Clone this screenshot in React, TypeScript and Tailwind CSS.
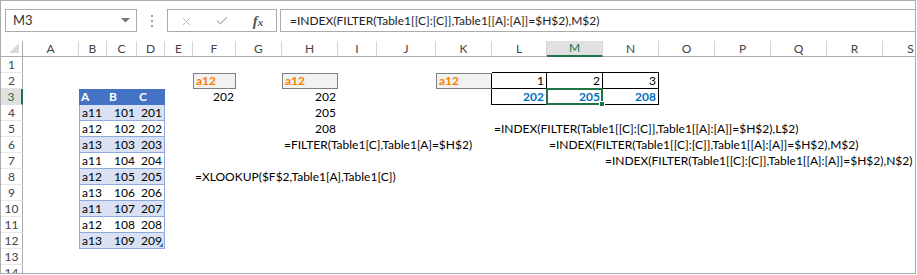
import { Check, X } from "lucide-react";

const COLS = ["A", "B", "C", "D", "E", "F", "G", "H", "I", "J", "K", "L", "M", "N", "O", "P", "Q", "R", "S"];
const WIDTHS = [
  "w-[56px]", "w-[28px]", "w-[30px]", "w-[28px]", "w-[28px]", "w-[43px]", "w-[46px]", "w-[56px]", "w-[39px]", "w-[59px]",
  "w-[56px]", "w-[55px]", "w-[56px]", "w-[56px]", "w-[56px]", "w-[56px]", "w-[56px]", "w-[56px]", "w-[56px]",
];

type Cell = { v?: string; r?: boolean; cls?: string; sel?: boolean; handle?: boolean };

const calc = "bg-[#F2F2F2] border border-[#7F7F7F] text-[#FA7D00] font-bold";
const out = "text-[#0070C0] font-bold border-b border-r border-black";
const formula = "=INDEX(FILTER(Table1[[C]:[C]],Table1[[A]:[A]]=$H$2),";

const cells: Record<string, Cell> = {
  L1: { cls: "border-b border-black" },
  M1: { cls: "border-b border-black" },
  N1: { cls: "border-b border-black" },
  F2: { v: "a12", cls: calc },
  H2: { v: "a12", cls: calc },
  K2: { v: "a12", cls: "bg-[#F2F2F2] border-y border-l border-[#7F7F7F] text-[#FA7D00] font-bold shadow-[inset_-1px_0_0_#000]" },
  L2: { v: "1", r: true, cls: "border-b border-r border-black" },
  M2: { v: "2", r: true, cls: "border-b border-r border-black" },
  N2: { v: "3", r: true, cls: "border-b border-r border-black" },
  F3: { v: "202", r: true },
  H3: { v: "202", r: true },
  K3: { cls: "border-r border-black" },
  L3: { v: "202", r: true, cls: out },
  M3: { v: "205", r: true, cls: out, sel: true },
  N3: { v: "208", r: true, cls: out },
  H4: { v: "205", r: true },
  H5: { v: "208", r: true },
  L5: { v: formula + "L$2)" },
  H6: { v: "=FILTER(Table1[C],Table1[A]=$H$2)" },
  M6: { v: formula + "M$2)" },
  N7: { v: formula + "N$2)" },
  F8: { v: "=XLOOKUP($F$2,Table1[A],Table1[C])" },
  B3: { v: "A", cls: "bg-[#4472C4] text-white font-bold" },
  C3: { v: "B", cls: "bg-[#4472C4] text-white font-bold" },
  D3: { v: "C", cls: "bg-[#4472C4] text-white font-bold" },
};

// table body, banded rows
for (let n = 4; n <= 12; n++) {
  const band = n % 2 === 0 ? "bg-[#D9E1F2]" : "bg-white";
  cells["B" + n] = { v: "a1" + (((n - 4) % 3) + 1), cls: `${band} border-l border-b border-[#8EA9DB]` };
  cells["C" + n] = { v: String(97 + n), r: true, cls: `${band} border-b border-[#8EA9DB]` };
  cells["D" + n] = { v: String(197 + n), r: true, cls: `${band} border-r border-b border-[#8EA9DB]`, handle: n === 12 };
}

function Row({ n }: { n: number }) {
  return (
    <div className="flex h-[16px]">
      {n === 3 ? (
        <div className="flex w-[22px] shrink-0 items-center justify-center border-r-2 border-b border-r-[#217346] border-b-[#E1E1E1] bg-[#E1E1E1] text-[#217346]">
          {n}
        </div>
      ) : (
        <div className="flex w-[22px] shrink-0 items-center justify-center border-r border-b border-r-[#ABABAB] border-b-[#E6E6E6] text-[#444]">
          {n}
        </div>
      )}
      {COLS.map((c, i) => {
        const cell = cells[c + n];
        return (
          <div
            key={c}
            className={`relative flex h-[16px] shrink-0 items-center whitespace-nowrap px-[2px] ${WIDTHS[i]} ${cell?.r ? "justify-end" : ""} ${cell?.cls ?? ""}`}
          >
            {cell?.v}
            {cell?.sel && (
              <div className="absolute -top-[1px] -right-[1px] -bottom-[1px] -left-[1px] z-10 border-2 border-[#217346]">
                <div className="absolute -right-[4px] -bottom-[4px] h-[6px] w-[6px] border border-white bg-[#217346]" />
              </div>
            )}
            {cell?.handle && (
              <div className="absolute right-[1px] bottom-[1px] h-0 w-0 border-b-[4px] border-l-[4px] border-b-[#4472C4] border-l-transparent" />
            )}
          </div>
        );
      })}
    </div>
  );
}

export default function App() {
  const rows = Array.from({ length: 14 }, (_, i) => i + 1);

  return (
    <div className="h-[275px] w-[917px] overflow-hidden bg-white font-[Lato,sans-serif] text-[12px] text-black">
      <div className="h-[274px] w-[916px] overflow-hidden border border-[#ABABAB]">
        {/* formula bar */}
        <div className="flex h-[40px] items-start pt-[8px] pl-[4px]">
          <div className="flex h-[23px] w-[132px] shrink-0 items-center justify-between border border-[#ABABAB] pr-[6px] pl-[7px] text-[13px] text-[#333]">
            <span>M3</span>
            <svg width="9" height="5" viewBox="0 0 9 5">
              <path d="M0 0h9L4.5 4.5z" fill="#777" />
            </svg>
          </div>
          <div className="flex h-[23px] w-[30px] shrink-0 flex-col items-center justify-center gap-[3px]">
            <span className="h-[2px] w-[2px] bg-[#9B9B9B]" />
            <span className="h-[2px] w-[2px] bg-[#9B9B9B]" />
            <span className="h-[2px] w-[2px] bg-[#9B9B9B]" />
          </div>
          <div className="grid h-[23px] w-[110px] shrink-0 grid-cols-3 items-center border border-[#ABABAB]">
            <span className="flex justify-center">
              <X size={13} strokeWidth={1.6} color="#B5B5B5" />
            </span>
            <span className="flex justify-center">
              <Check size={14} strokeWidth={2.2} color="#B5B5B5" />
            </span>
            <span className="flex items-baseline justify-center font-['Liberation_Serif',serif] text-[15px] font-bold text-[#555] italic">
              f<span className="text-[11px]">x</span>
            </span>
          </div>
          <div className="ml-[3px] flex h-[23px] flex-1 items-center border-y border-l border-[#ABABAB] pl-[9px] text-[#222]">
            =INDEX(FILTER(Table1[[C]:[C]],Table1[[A]:[A]]=$H$2),M$2)
          </div>
        </div>

        {/* column headers */}
        <div className="flex h-[16px]">
          <div className="relative w-[22px] shrink-0 border-r border-b border-r-[#ABABAB] border-b-[#ABABAB]">
            <div className="absolute right-[3px] bottom-[3px] h-0 w-0 border-b-[10px] border-l-[10px] border-b-[#DADADA] border-l-transparent" />
          </div>
          {COLS.map((c, i) =>
            c === "M" ? (
              <div
                key={c}
                className={`flex shrink-0 items-center justify-center border-r border-b-2 border-r-[#D4D4D4] border-b-[#217346] bg-[#E1E1E1] text-[#217346] ${WIDTHS[i]}`}
              >
                {c}
              </div>
            ) : (
              <div
                key={c}
                className={`flex shrink-0 items-center justify-center border-r border-b border-r-[#D4D4D4] border-b-[#ABABAB] text-[#444] ${WIDTHS[i]}`}
              >
                {c}
              </div>
            )
          )}
        </div>

        {rows.map((n) => (
          <Row key={n} n={n} />
        ))}
      </div>
    </div>
  );
}
